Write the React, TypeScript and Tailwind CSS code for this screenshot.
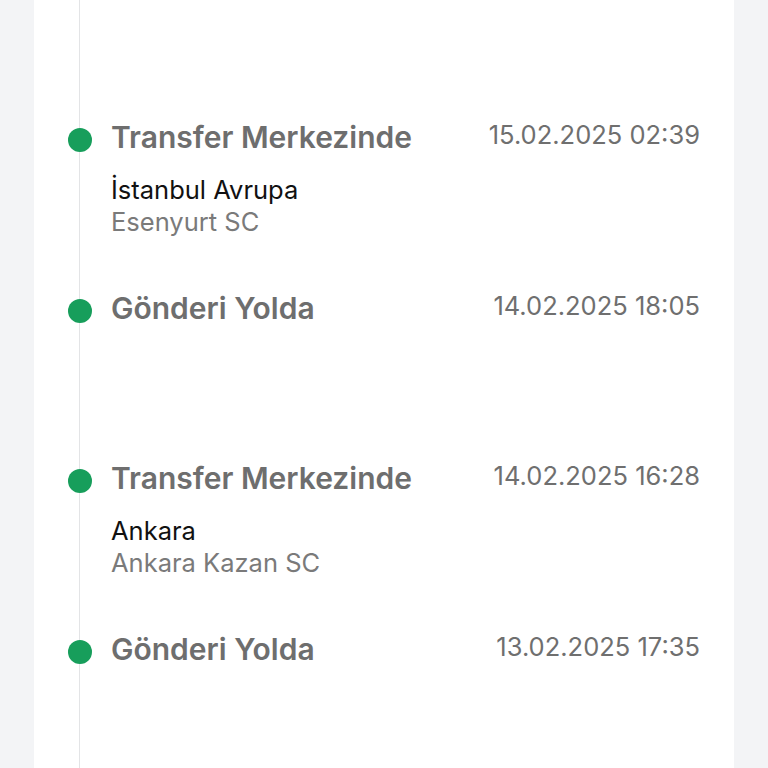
import React from 'react';

type Step = {
  title: string;
  date: string;
  city?: string;
  branch?: string;
};

const STEPS: Step[] = [
  { title: 'Transfer Merkezinde', date: '15.02.2025 02:39', city: 'İstanbul Avrupa', branch: 'Esenyurt SC' },
  { title: 'Gönderi Yolda', date: '14.02.2025 18:05' },
  { title: 'Transfer Merkezinde', date: '14.02.2025 16:28', city: 'Ankara', branch: 'Ankara Kazan SC' },
  { title: 'Gönderi Yolda', date: '13.02.2025 17:35' },
];

function TimelineItem({ step }: { step: Step }) {
  return (
    <li className="relative h-[170.67px] pl-[31px] pr-[34px]">
      <span className="absolute -left-[12.5px] top-[9px] h-6 w-6 rounded-full bg-[#179e5b]" />
      <div className="flex items-start justify-between">
        <h3 className="text-[30px] leading-9 font-semibold text-[#6e6e6e]">{step.title}</h3>
        <span className="mt-px text-[25.5px] leading-[30px] text-[#6f6f6f]">{step.date}</span>
      </div>
      {step.city && (
        <div className="mt-[19px] text-[25.5px] leading-8">
          <p className="text-[#111111]">{step.city}</p>
          <p className="text-[#7a7a7a]">{step.branch}</p>
        </div>
      )}
    </li>
  );
}

export default function App() {
  return (
    <div
      className="h-[768px] overflow-hidden bg-[#f3f4f6] px-[34px]"
      style={{ fontFamily: 'Inter, "Noto Sans", sans-serif' }}
    >
      <div className="h-full bg-white pl-[45px]">
        <ol className="h-full border-l border-[#e3e4e6] pt-[119px]">
          {STEPS.map((step, i) => (
            <TimelineItem key={i} step={step} />
          ))}
        </ol>
      </div>
    </div>
  );
}
